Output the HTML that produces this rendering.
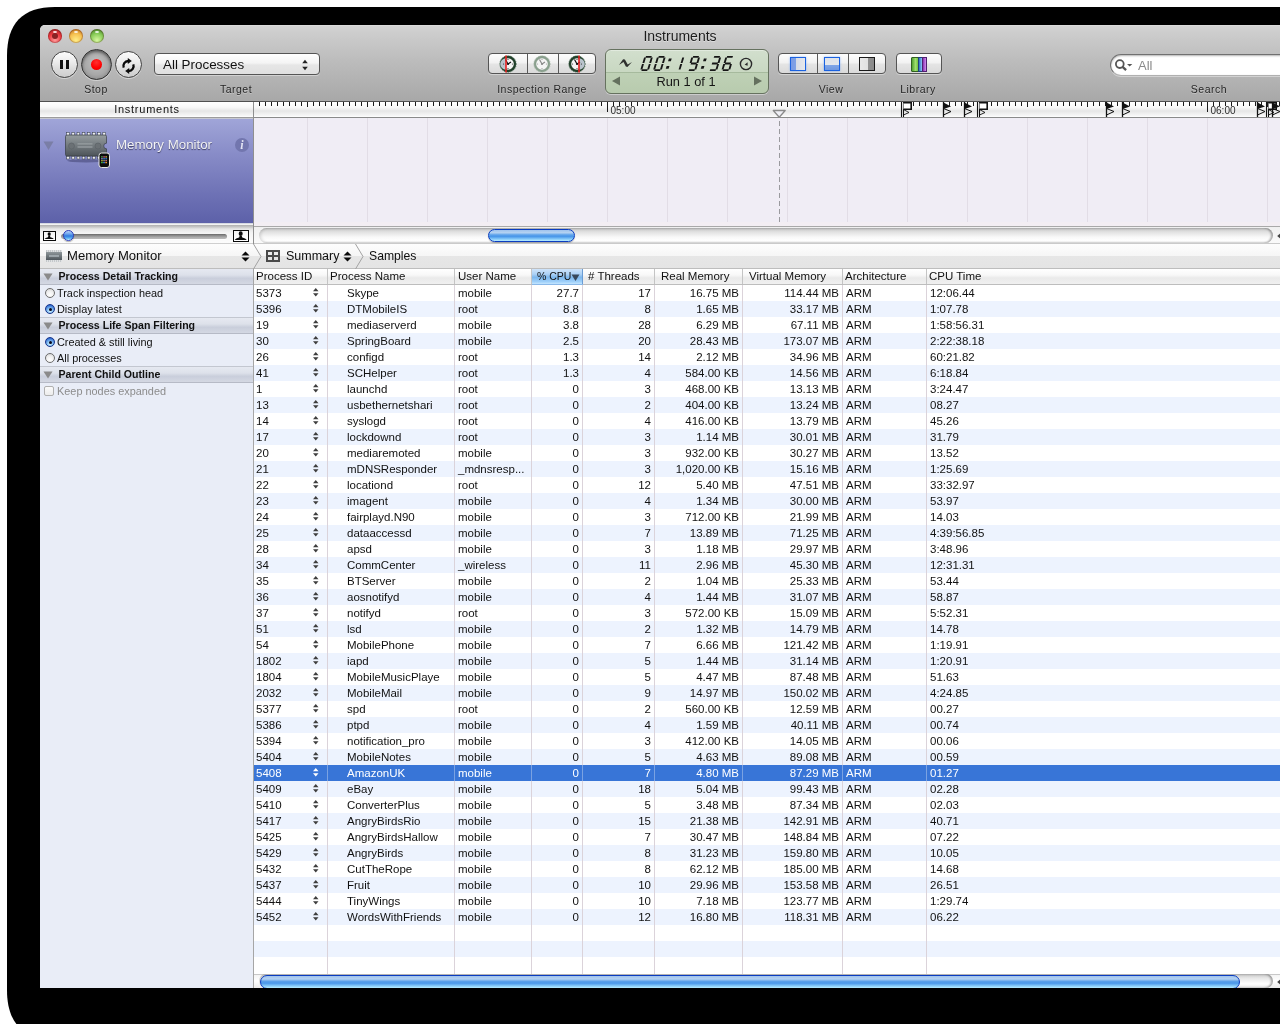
<!DOCTYPE html><html><head><meta charset="utf-8"><style>
*{margin:0;padding:0;box-sizing:border-box}
html,body{width:1280px;height:1024px;overflow:hidden;background:#fff;font-family:"Liberation Sans",sans-serif;color:#000}
div,span,svg{position:absolute}
#shadow{left:7px;top:7px;width:1400px;height:1100px;background:#000;border-radius:48px}
#win{will-change:transform;left:40px;top:25px;width:1260px;height:963px;overflow:hidden;border-radius:5px 5px 0 0;background:#e9edf6}
#tb{left:0;top:0;width:1260px;height:77px;background:linear-gradient(#e2e2e2 0,#d3d3d3 1px,#cdcdcd 10%,#bdbdbd 45%,#a8a8a8 100%);border-bottom:1px solid #505050}
.lbl{font-size:10.5px;letter-spacing:0.5px;color:#262626;white-space:nowrap;text-align:center;line-height:14px;text-shadow:0 1px 0 rgba(255,255,255,.3)}
.cbtn{border-radius:50%;border:1px solid #444;background:linear-gradient(#fcfcfc,#ececec 40%,#dadada 70%,#cdcdcd);box-shadow:0 1px 0 rgba(255,255,255,.45)}
.seg{border:1px solid #555;border-radius:4px;background:linear-gradient(#fdfdfd,#f2f2f2 45%,#e4e4e4 55%,#dadada);box-shadow:0 1px 0 rgba(255,255,255,.4)}
.vd{top:0;width:1px;height:100%;background:#5a5a5a}
.tbl{font-size:11.5px;line-height:16px;white-space:nowrap}
.r{text-align:right}
.hd{font-size:11.5px;line-height:15px;white-space:nowrap}
.sec{left:0;width:213px;height:16px;background:linear-gradient(#e8ebf3,#dde1ea 40%,#c9cedb 60%,#d6dae5);border-bottom:1px solid #b4b8c4;font-weight:bold;font-size:10.6px;line-height:15px}
.opt{font-size:10.9px;line-height:16px;white-space:nowrap}
</style></head><body><svg width="1280" height="1024" style="left:0;top:0"><path d="M55 7H1290V1039H55C22.4 1039 7 1022.6 7 990V56C7 23.4 22.4 7 55 7Z" fill="#000"/></svg><div id="win"><div id="tb"></div><div style="left:540px;top:3px;white-space:nowrap;width:200px;text-align:center;font-size:14px;line-height:17px;color:#1c1c1c;text-shadow:0 1px 0 rgba(255,255,255,.4)">Instruments</div><div style="left:8px;top:4px;width:14px;height:14px;border-radius:50%;background:radial-gradient(circle at 50% 80%,#ff9a9a 0,#ee3a40 50%,#8a1a1c 100%);box-shadow:inset 0 0 0 1px rgba(60,0,0,.25)"><div style="left:5px;top:1.5px;width:4px;height:2px;border-radius:50%;background:rgba(255,255,255,.85)"></div></div><div style="left:29px;top:4px;width:14px;height:14px;border-radius:50%;background:radial-gradient(circle at 50% 80%,#ffee88 0,#f6c050 50%,#b05a10 100%);box-shadow:inset 0 0 0 1px rgba(60,0,0,.25)"><div style="left:5px;top:1.5px;width:4px;height:2px;border-radius:50%;background:rgba(255,255,255,.85)"></div></div><div style="left:50px;top:4px;width:14px;height:14px;border-radius:50%;background:radial-gradient(circle at 50% 80%,#d8f8a0 0,#88cc58 50%,#357018 100%);box-shadow:inset 0 0 0 1px rgba(60,0,0,.25)"><div style="left:5px;top:1.5px;width:4px;height:2px;border-radius:50%;background:rgba(255,255,255,.85)"></div></div><div style="left:12px;top:8px;width:6px;height:6px;border-radius:50%;background:#8a2224"></div><div class="cbtn" style="left:11px;top:26px;width:27px;height:27px;"><div style="left:7.8px;top:8.2px;width:3.4px;height:9px;background:#111"></div><div style="left:13.8px;top:8.2px;width:3.4px;height:9px;background:#111"></div></div><div style="left:41px;top:24px;width:31px;height:31px;border-radius:50%;border:1px solid #333;background:radial-gradient(circle at 50% 45%,#c2c2c2 0,#a8a8a8 55%,#8a8a8a 85%,#5a5a5a 100%);box-shadow:inset 0 2px 3px rgba(0,0,0,.45),0 1px 0 rgba(255,255,255,.4)"><div style="left:9px;top:9px;width:11px;height:11px;border-radius:50%;background:radial-gradient(circle at 50% 30%,#ff3030,#f00 60%,#d00)"></div></div><div class="cbtn" style="left:75px;top:26px;width:27px;height:27px;"><svg width="25" height="25" viewBox="0 -1.5 25 25" style="left:0;top:0"><path d="M7.7 14.2A5 5 0 0 1 12.3 7.5" fill="none" stroke="#0a0a0a" stroke-width="2.3"/><path d="M11.8 4.4L15.8 7.5L11.8 10.6Z" fill="#0a0a0a"/><path d="M17.3 10.8A5 5 0 0 1 12.7 17.5" fill="none" stroke="#0a0a0a" stroke-width="2.3"/><path d="M13.2 14.4L9.2 17.5L13.2 20.6Z" fill="#0a0a0a"/></svg></div><div class="lbl" style="left:30px;top:57px;width:52px">Stop</div><div style="left:114px;top:28px;width:166px;height:22px;border:1px solid #555;border-radius:4px;background:linear-gradient(#ffffff,#f4f4f4 45%,#e6e6e6 55%,#e0e0e0);box-shadow:0 1px 0 rgba(255,255,255,.4)"><div style="left:8px;top:3px;white-space:nowrap;line-height:16px;font-size:13.4px;color:#111">All Processes</div><svg width="8" height="14" style="left:146px;top:3.5px"><path d="M1.2 5.2L4 1.8L6.8 5.2Z M1.2 8.8L4 12.2L6.8 8.8Z" fill="#222"/></svg></div><div class="lbl" style="left:166px;top:57px;width:60px">Target</div><div class="seg" style="left:448px;top:28px;width:108px;height:21px;"><div class="vd" style="left:37.5px"></div><div class="vd" style="left:68.5px"></div></div><svg width="20" height="20" style="left:458px;top:29px" viewBox="-10 -10 20 20"><circle r="8.2" fill="#21402a"/><circle r="8.2" fill="none" stroke="#3a5c42" stroke-width="0.8" stroke-dasharray="1 1"/><circle r="5.8" fill="#f4f4f4"/><path d="M-2 -5.8A5.8 5.8 0 0 0 -2 5.8Z" fill="#b9c3cc"/><path d="M0 0L-2.5 -4.5M0 0L3 -2" stroke="#111" stroke-width="1.2" fill="none"/><circle r="1.1" fill="#111"/><circle cx="4.40" cy="0.00" r="0.5" fill="#111"/><circle cx="0.00" cy="4.40" r="0.5" fill="#111"/><circle cx="-4.40" cy="0.00" r="0.5" fill="#111"/><circle cx="-0.00" cy="-4.40" r="0.5" fill="#111"/><path d="M-2 -8.5V8.5" stroke="#e82020" stroke-width="1.6"/></svg><svg width="20" height="20" style="left:492px;top:29px" viewBox="-10 -10 20 20"><circle r="8.2" fill="#8aa08e"/><circle r="8.2" fill="none" stroke="#a8b8aa" stroke-width="0.8" stroke-dasharray="1 1"/><circle r="5.8" fill="#f4f4f4"/><path d="M0 0L-2.5 -4.5M0 0L3 -2" stroke="#8a8a8a" stroke-width="1.2" fill="none"/><circle r="1.1" fill="#8a8a8a"/><circle cx="4.40" cy="0.00" r="0.5" fill="#8a8a8a"/><circle cx="0.00" cy="4.40" r="0.5" fill="#8a8a8a"/><circle cx="-4.40" cy="0.00" r="0.5" fill="#8a8a8a"/><circle cx="-0.00" cy="-4.40" r="0.5" fill="#8a8a8a"/></svg><svg width="20" height="20" style="left:527px;top:29px" viewBox="-10 -10 20 20"><circle r="8.2" fill="#21402a"/><circle r="8.2" fill="none" stroke="#3a5c42" stroke-width="0.8" stroke-dasharray="1 1"/><circle r="5.8" fill="#f4f4f4"/><path d="M2 -5.8A5.8 5.8 0 0 1 2 5.8Z" fill="#b9c3cc"/><path d="M0 0L-2.5 -4.5M0 0L3 -2" stroke="#111" stroke-width="1.2" fill="none"/><circle r="1.1" fill="#111"/><circle cx="4.40" cy="0.00" r="0.5" fill="#111"/><circle cx="0.00" cy="4.40" r="0.5" fill="#111"/><circle cx="-4.40" cy="0.00" r="0.5" fill="#111"/><circle cx="-0.00" cy="-4.40" r="0.5" fill="#111"/><path d="M2 -8.5V8.5" stroke="#e82020" stroke-width="1.6"/></svg><div class="lbl" style="left:446px;top:57px;width:112px">Inspection Range</div><div style="left:565px;top:24px;width:164px;height:45px;border:1px solid #66725f;border-radius:6px;background:linear-gradient(#d2dfcd 0,#c9d8c2 50%,#bfd1b6 51%,#b8cbae 100%);box-shadow:0 1px 0 rgba(255,255,255,.4),inset 0 1px 0 rgba(255,255,255,.35)"><div style="left:0;top:22px;width:162px;height:1px;background:rgba(150,170,140,.6)"></div></div><svg width="16" height="12" style="left:578px;top:32px" viewBox="618 57 16 12"><path d="M619 64.9L623.1 59.3L624.9 59.5L627.7 64.5L632 62L627.4 67.1L625.8 66.6L623.5 62Z" fill="#2e302e"/></svg><svg width="110" height="20" style="left:590px;top:28px" viewBox="630 53 110 20"><g transform="translate(640,71) skewX(-17)" stroke="#161616" stroke-width="1.9" stroke-linecap="butt"><path d="M1.4 -14.1L7.2 -14.1"/><path d="M7.7 -13.5L7.7 -8.1"/><path d="M7.7 -6.9L7.7 -1.5"/><path d="M1.4 -0.9L7.2 -0.9"/><path d="M0.9 -6.9L0.9 -1.5"/><path d="M0.9 -13.5L0.9 -8.1"/></g><g transform="translate(652.8,71) skewX(-17)" stroke="#161616" stroke-width="1.9" stroke-linecap="butt"><path d="M1.4 -14.1L7.2 -14.1"/><path d="M7.7 -13.5L7.7 -8.1"/><path d="M7.7 -6.9L7.7 -1.5"/><path d="M1.4 -0.9L7.2 -0.9"/><path d="M0.9 -6.9L0.9 -1.5"/><path d="M0.9 -13.5L0.9 -8.1"/></g><g transform="translate(671.4,71) skewX(-17)" stroke="#161616" stroke-width="1.9" stroke-linecap="butt"><path d="M7.7 -13.5L7.7 -8.1"/><path d="M7.7 -6.9L7.7 -1.5"/></g><g transform="translate(687.2,71) skewX(-17)" stroke="#161616" stroke-width="1.9" stroke-linecap="butt"><path d="M1.4 -14.1L7.2 -14.1"/><path d="M7.7 -13.5L7.7 -8.1"/><path d="M7.7 -6.9L7.7 -1.5"/><path d="M1.4 -0.9L7.2 -0.9"/><path d="M0.9 -13.5L0.9 -8.1"/><path d="M1.4 -7.5L7.2 -7.5"/></g><g transform="translate(708.3,71) skewX(-17)" stroke="#161616" stroke-width="1.9" stroke-linecap="butt"><path d="M1.4 -14.1L7.2 -14.1"/><path d="M7.7 -13.5L7.7 -8.1"/><path d="M7.7 -6.9L7.7 -1.5"/><path d="M1.4 -0.9L7.2 -0.9"/><path d="M1.4 -7.5L7.2 -7.5"/></g><g transform="translate(721.2,71) skewX(-17)" stroke="#161616" stroke-width="1.9" stroke-linecap="butt"><path d="M1.4 -14.1L7.2 -14.1"/><path d="M7.7 -6.9L7.7 -1.5"/><path d="M1.4 -0.9L7.2 -0.9"/><path d="M0.9 -6.9L0.9 -1.5"/><path d="M0.9 -13.5L0.9 -8.1"/><path d="M1.4 -7.5L7.2 -7.5"/></g><g transform="translate(666.5,71) skewX(-17)"><rect x="-1.4" y="-12.5" width="2.8" height="2.8" fill="#161616"/><rect x="-1.4" y="-5" width="2.8" height="2.8" fill="#161616"/></g><g transform="translate(701.5,71) skewX(-17)"><rect x="-1.4" y="-12.5" width="2.8" height="2.8" fill="#161616"/><rect x="-1.4" y="-5" width="2.8" height="2.8" fill="#161616"/></g></svg><svg width="16" height="16" style="left:698px;top:31px"><circle cx="8" cy="8" r="5.6" fill="none" stroke="#2a2a2a" stroke-width="1.4"/><path d="M9.6 6.2L6.6 8.8L9.6 9.8Z" fill="#2a2a2a"/></svg><svg width="10" height="11" style="left:571px;top:51px"><path d="M9 0.5L1 5L9 9.5Z" fill="#64705e"/></svg><svg width="10" height="11" style="left:713px;top:51px"><path d="M1 0.5L9 5L1 9.5Z" fill="#64705e"/></svg><div style="left:586px;top:48.5px;white-space:nowrap;width:120px;text-align:center;font-size:12.8px;line-height:16px;color:#151515">Run 1 of 1</div><div class="seg" style="left:738px;top:28px;width:108px;height:21px;"><div class="vd" style="left:37.5px"></div><div class="vd" style="left:68.5px"></div></div><div style="left:750px;top:32px;width:16px;height:14px;border:1.5px solid #1a62e0;background:linear-gradient(90deg,#7a9ae4 0,#7fa2e6 38%,#d8dde6 38%,#e6e8ec);box-shadow:0 0 2px rgba(40,120,255,.5)"></div><div style="left:784px;top:32px;width:16px;height:14px;border:1.5px solid #1a62e0;background:linear-gradient(#dfe3ea 0,#e4e7ec 58%,#80a6e8 58%,#7098e0);box-shadow:0 0 2px rgba(40,120,255,.5)"></div><div style="left:819px;top:32px;width:16px;height:14px;border:1.5px solid #1a1a1a;background:linear-gradient(90deg,#e8e8e8 0,#e0e0e0 60%,#909090 60%,#8a8a8a)"></div><div class="lbl" style="left:766px;top:57px;width:50px">View</div><div class="seg" style="left:856px;top:28px;width:46px;height:21px;"></div><div style="left:871px;top:32px;width:8px;height:15px;background:linear-gradient(90deg,#50a030,#a0e070 60%,#70c040);border:1px solid #306020;border-radius:1px"></div><div style="left:878px;top:32px;width:5px;height:15px;background:linear-gradient(90deg,#2a70c0,#90c8f8);border:1px solid #20407a"></div><div style="left:882px;top:32px;width:5px;height:15px;background:linear-gradient(90deg,#8a30b0,#d090f0);border:1px solid #502070"></div><div class="lbl" style="left:848px;top:57px;width:60px">Library</div><div style="left:1070px;top:29px;width:190px;height:22px;border:1px solid #707070;border-bottom-color:#b0b0b0;border-radius:11px;background:#fff;box-shadow:inset 0 1px 2px rgba(0,0,0,.3),0 1px 0 rgba(255,255,255,.4)"><svg width="24" height="16" style="left:4px;top:2px"><circle cx="4.8" cy="7.1" r="3.9" fill="none" stroke="#555" stroke-width="1.8"/><path d="M7.6 9.9L11.1 13.2" stroke="#555" stroke-width="2.3"/><path d="M12 7H17.3L14.65 9.6Z" fill="#555"/></svg><div style="left:27px;top:3px;font-size:13px;line-height:16px;color:#8a8a8a">All</div></div><div class="lbl" style="left:1139px;top:57px;width:60px">Search</div><div style="left:0px;top:77px;width:213px;height:15px;background:linear-gradient(#ffffff,#f8f8f8 35%,#e6e6e6 60%,#f6f6f6 90%,#fff)"><div style="left:0;top:0;width:214px;text-align:center;font-size:11px;letter-spacing:0.75px;line-height:15px;color:#111">Instruments</div></div><div style="left:0px;top:92px;width:213px;height:1px;background:#9c9c9c"></div><div style="left:0px;top:93px;width:213px;height:1px;background:#c8c9d2"></div><div style="left:213px;top:77px;width:1px;height:142px;background:#8f8f8f"></div><div style="left:214px;top:77px;width:1046px;height:15px;background:linear-gradient(#ffffff,#f8f8f8 35%,#e6e6e6 60%,#f6f6f6 90%,#fff)"></div><div style="left:219px;top:77px;width:1041px;height:4px;background:repeating-linear-gradient(90deg,#1a1a1a 0,#1a1a1a 1px,transparent 1px,transparent 6px)"></div><div style="left:267px;top:77px;width:993px;height:5px;background:repeating-linear-gradient(90deg,#1a1a1a 0,#1a1a1a 1px,transparent 1px,transparent 60px)"></div><div style="left:567px;top:77px;width:1px;height:10px;background:#1a1a1a"></div><div style="left:1167px;top:77px;width:1px;height:10px;background:#1a1a1a"></div><div style="left:570.5px;top:79.5px;white-space:nowrap;font-size:10px;line-height:12px;color:#2c2c2c">05:00</div><div style="left:1170.5px;top:79.5px;white-space:nowrap;font-size:10px;line-height:12px;color:#2c2c2c">06:00</div><div style="left:214px;top:92px;width:1046px;height:1px;background:#8a8a8a"></div><svg width="15" height="10" style="left:732px;top:83.5px"><path d="M1.3 1.5H13.2L7.25 8.2Z" fill="#f0f0f6" stroke="#8a8a8a" stroke-width="1.3" stroke-linejoin="round"/></svg><svg width="14" height="16" style="left:860px;top:77px" viewBox="900 102 14 16"><path d="M901.5 102V117M903.5 102V117" stroke="#111" stroke-width="1.1"/><path d="M903.5 102.8H911.2V109.2H903.5" fill="#fff" stroke="#111" stroke-width="1.6"/><path d="M903.5 109.5L909 112.5L903.5 115" fill="none" stroke="#111" stroke-width="0.9"/></svg><svg width="14" height="16" style="left:902px;top:77px" viewBox="942 102 14 16"><path d="M943.5 102V117" stroke="#111" stroke-width="1.3"/><path d="M943.5 102.5L951 106.5L943.5 109Z" fill="#111"/><path d="M943.5 108.5L951 111.5L943.5 115" fill="none" stroke="#111" stroke-width="1"/></svg><svg width="14" height="16" style="left:923px;top:77px" viewBox="963 102 14 16"><path d="M964.5 102V117" stroke="#111" stroke-width="1.3"/><path d="M964.5 102.5L972 106.5L964.5 109Z" fill="#111"/><path d="M964.5 108.5L972 111.5L964.5 115" fill="none" stroke="#111" stroke-width="1"/></svg><svg width="14" height="16" style="left:936px;top:77px" viewBox="976 102 14 16"><path d="M977.5 102V117M979.5 102V117" stroke="#111" stroke-width="1.1"/><path d="M979.5 102.8H987.2V109.2H979.5" fill="#fff" stroke="#111" stroke-width="1.6"/><path d="M979.5 109.5L985 112.5L979.5 115" fill="none" stroke="#111" stroke-width="0.9"/></svg><svg width="14" height="16" style="left:1065px;top:77px" viewBox="1105 102 14 16"><path d="M1106.5 102V117" stroke="#111" stroke-width="1.3"/><path d="M1106.5 102.5L1114 106.5L1106.5 109Z" fill="#111"/><path d="M1106.5 108.5L1114 111.5L1106.5 115" fill="none" stroke="#111" stroke-width="1"/></svg><svg width="14" height="16" style="left:1081px;top:77px" viewBox="1121 102 14 16"><path d="M1122.5 102V117" stroke="#111" stroke-width="1.3"/><path d="M1122.5 102.5L1130 106.5L1122.5 109Z" fill="#111"/><path d="M1122.5 108.5L1130 111.5L1122.5 115" fill="none" stroke="#111" stroke-width="1"/></svg><svg width="14" height="16" style="left:1216px;top:77px" viewBox="1256 102 14 16"><path d="M1257.5 102V117" stroke="#111" stroke-width="1.3"/><path d="M1257.5 102.5L1265 106.5L1257.5 109Z" fill="#111"/><path d="M1257.5 108.5L1265 111.5L1257.5 115" fill="none" stroke="#111" stroke-width="1"/></svg><svg width="14" height="16" style="left:1225px;top:77px" viewBox="1265 102 14 16"><path d="M1266.5 102V117M1268.5 102V117" stroke="#111" stroke-width="1.1"/><path d="M1268.5 102.8H1276.2V109.2H1268.5" fill="#fff" stroke="#111" stroke-width="1.6"/><path d="M1268.5 109.5L1274 112.5L1268.5 115" fill="none" stroke="#111" stroke-width="0.9"/></svg><svg width="14" height="16" style="left:1231px;top:77px" viewBox="1271 102 14 16"><path d="M1272.5 102V117" stroke="#111" stroke-width="1.3"/><path d="M1272.5 102.5L1280 106.5L1272.5 109Z" fill="#111"/><path d="M1272.5 108.5L1280 111.5L1272.5 115" fill="none" stroke="#111" stroke-width="1"/></svg><div style="left:0px;top:94px;width:213px;height:104px;background:linear-gradient(#a0a5d8,#878bc7 35%,#6c70b4 75%,#5d61a9)"></div><svg width="12" height="10" style="left:3px;top:116px"><path d="M0.5 0.5H10.5L5.5 9Z" fill="#7a7ea6"/></svg><svg width="48" height="40" style="left:24px;top:106px" viewBox="0 0 48 40"><defs><linearGradient id="cg" x1="0" y1="0" x2="0" y2="1"><stop offset="0" stop-color="#959c9f"/><stop offset=".5" stop-color="#737a7e"/><stop offset="1" stop-color="#4d5459"/></linearGradient></defs><ellipse cx="22" cy="29.8" rx="19" ry="1.6" fill="rgba(30,30,70,.35)"/><rect x="2.70" y="1.6" width="2.7" height="2.8" fill="#f2f2f2" stroke="#333a40" stroke-width=".5"/><rect x="7.86" y="1.6" width="2.7" height="2.8" fill="#f2f2f2" stroke="#333a40" stroke-width=".5"/><rect x="13.02" y="1.6" width="2.7" height="2.8" fill="#f2f2f2" stroke="#333a40" stroke-width=".5"/><rect x="18.18" y="1.6" width="2.7" height="2.8" fill="#f2f2f2" stroke="#333a40" stroke-width=".5"/><rect x="23.34" y="1.6" width="2.7" height="2.8" fill="#f2f2f2" stroke="#333a40" stroke-width=".5"/><rect x="28.50" y="1.6" width="2.7" height="2.8" fill="#f2f2f2" stroke="#333a40" stroke-width=".5"/><rect x="33.66" y="1.6" width="2.7" height="2.8" fill="#f2f2f2" stroke="#333a40" stroke-width=".5"/><rect x="38.82" y="1.6" width="2.7" height="2.8" fill="#f2f2f2" stroke="#333a40" stroke-width=".5"/><rect x="2.70" y="25.2" width="2.7" height="2.8" fill="#eeeeee" stroke="#333a40" stroke-width=".5"/><rect x="7.86" y="25.2" width="2.7" height="2.8" fill="#eeeeee" stroke="#333a40" stroke-width=".5"/><rect x="13.02" y="25.2" width="2.7" height="2.8" fill="#eeeeee" stroke="#333a40" stroke-width=".5"/><rect x="18.18" y="25.2" width="2.7" height="2.8" fill="#eeeeee" stroke="#333a40" stroke-width=".5"/><rect x="23.34" y="25.2" width="2.7" height="2.8" fill="#eeeeee" stroke="#333a40" stroke-width=".5"/><rect x="28.50" y="25.2" width="2.7" height="2.8" fill="#eeeeee" stroke="#333a40" stroke-width=".5"/><rect x="33.66" y="25.2" width="2.7" height="2.8" fill="#eeeeee" stroke="#333a40" stroke-width=".5"/><rect x="38.82" y="25.2" width="2.7" height="2.8" fill="#eeeeee" stroke="#333a40" stroke-width=".5"/><path d="M1.5 5.5Q1.5 4 3 4H41Q42.5 4 42.5 5.5V12.2A2.8 2.8 0 0 0 42.5 17.8V23.5Q42.5 25 41 25H3Q1.5 25 1.5 23.5Z" fill="url(#cg)" stroke="#383e44" stroke-width=".7"/><circle cx="7.5" cy="15" r="3" fill="#6b7175" stroke="#596064" stroke-width=".6"/><circle cx="34" cy="15" r="3" fill="#6b7175" stroke="#596064" stroke-width=".6"/><rect x="13.5" y="12.3" width="15" height="1.2" fill="#a9afb2" opacity=".7"/><rect x="13.5" y="15.2" width="15" height="1.6" fill="#a9afb2" opacity=".6"/></svg><svg width="13" height="17" style="left:58px;top:127px" viewBox="0 0 13 17"><rect x="1" y="1" width="10.5" height="14.5" rx="2.5" fill="#0c0c0c" stroke="#e6e6e6" stroke-width="1"/><rect x="3" y="4" width="6.5" height="8" fill="#111"/><rect x="3.2" y="4.3" width="1.5" height="1.2" fill="#5c5"/><rect x="5.3" y="4.3" width="1.5" height="1.2" fill="#e5a"/><rect x="7.4" y="4.3" width="1.5" height="1.2" fill="#ec4"/><rect x="3.2" y="6.2" width="1.5" height="1.2" fill="#a9e"/><rect x="5.3" y="6.2" width="1.5" height="1.2" fill="#3ae"/><rect x="7.4" y="6.2" width="1.5" height="1.2" fill="#48f"/><rect x="3.2" y="8.1" width="1.5" height="1.2" fill="#cc4"/><rect x="5.3" y="8.1" width="1.5" height="1.2" fill="#999"/><rect x="7.4" y="8.1" width="1.5" height="1.2" fill="#e77"/><rect x="3.2" y="10.0" width="1.5" height="1.2" fill="#4c4"/><rect x="5.3" y="10.0" width="1.5" height="1.2" fill="#48f"/><rect x="7.4" y="10.0" width="1.5" height="1.2" fill="#fa3"/></svg><div style="left:76px;top:112px;white-space:nowrap;font-size:13.3px;line-height:16px;color:#f2f2f4;text-shadow:0 1px 1px rgba(30,30,60,.75)">Memory Monitor</div><div style="left:195px;top:113px;width:14px;height:14px;border-radius:50%;background:#7276ae"><div style="left:0;top:0;width:14px;text-align:center;font:italic bold 12px/14px 'Liberation Serif',serif;color:#e2e3f2">i</div></div><div style="left:214px;top:93px;width:1046px;height:104px;background:#f0edf5"></div><div style="left:267px;top:93px;width:993px;height:104px;background:repeating-linear-gradient(90deg,#e2dde6 0,#e2dde6 1px,transparent 1px,transparent 60px)"></div><div style="left:739px;top:96px;width:1px;height:101px;background:repeating-linear-gradient(#9a9a9e 0,#9a9a9e 5px,transparent 5px,transparent 8px)"></div><div style="left:0px;top:198px;width:213px;height:20px;background:linear-gradient(#d6d9e2 0,#d6d9e2 1px,#f2f2f2 1px,#f2f2f2 2px,#aeaeae 2px,#c8c8c8 4px,#e6e6e6 6px,#f4f4f4 50%,#fcfcfc 100%)"></div><div style="left:0px;top:218px;width:213px;height:1px;background:#cfcfcf"></div><div style="left:3px;top:206px;width:13px;height:10px;border:1.3px solid #0a0a0a;background:linear-gradient(#f4f4f4,#fff)"><svg width="10.4" height="7.4" style="left:0;top:0" viewBox="0 0 10 8" preserveAspectRatio="none"><ellipse cx="5" cy="2.3" rx="1.5" ry="2" fill="#0a0a0a"/><path d="M0.3 8Q1 6.2 3.8 5.6L4.2 4.3H5.8L6.2 5.6Q9 6.2 9.7 8Z" fill="#0a0a0a"/></svg></div><div style="left:193px;top:205px;width:16px;height:12px;border:1.3px solid #0a0a0a;background:linear-gradient(#f4f4f4,#fff)"><svg width="13.4" height="9.4" style="left:0;top:0" viewBox="0 0 10 8" preserveAspectRatio="none"><ellipse cx="5" cy="2.3" rx="1.5" ry="2" fill="#0a0a0a"/><path d="M0.3 8Q1 6.2 3.8 5.6L4.2 4.3H5.8L6.2 5.6Q9 6.2 9.7 8Z" fill="#0a0a0a"/></svg></div><div style="left:21px;top:209px;width:166px;height:5px;border-radius:2.5px;background:linear-gradient(#686868,#8a8a8a 30%,#acacac 65%,#bcbcbc);box-shadow:0 1px 0 rgba(255,255,255,.8)"></div><div style="left:23px;top:205px;width:11px;height:11px;border-radius:50%;border:1px solid #2a3cb8;background:linear-gradient(#b8d4f8 0,#6aa2ec 35%,#2f7ae0 55%,#5ab0f0 80%,#c4f4ff 100%);box-shadow:0 1px 1px rgba(0,0,0,.3)"></div><div style="left:214px;top:197px;width:1046px;height:21px;background:linear-gradient(#f3eef3 0,#f3eef3 4px,#a9a9a9 4px,#a9a9a9 5px,#f0f0f0 5px,#fafafa 100%)"></div><div style="left:214px;top:218px;width:1046px;height:1px;background:#cacaca"></div><div style="left:219px;top:203px;width:1014px;height:15px;border-radius:8px;background:linear-gradient(#c4c4c4,#e0e0e0 25%,#f8f8f8 60%,#ffffff 85%,#f0f0f0);box-shadow:inset 2px 0 3px rgba(0,0,0,.12),inset -2px 0 2px rgba(0,0,0,.3)"></div><div style="left:448px;top:204px;width:87px;height:13px;border-radius:7px;border:1px solid #0a3cc0;background:linear-gradient(#9fc2ec 0,#b4d2f2 25%,#5aa0ea 45%,#4a98ea 60%,#8ed0fa 85%,#b8ecff 100%);box-shadow:0 1px 1px rgba(0,0,0,.25)"></div><svg width="8" height="10" style="left:1236px;top:206px"><path d="M5 1.8L1.2 5L5 8.2Z" fill="#444"/></svg><div style="left:0px;top:219px;width:1260px;height:24px;background:linear-gradient(#fdfdfd 0,#f6f6f6 48%,#e6e6e6 50%,#e4e4e4 100%)"></div><div style="left:0px;top:243px;width:1260px;height:1px;background:#bdbdbd"></div><div style="left:6px;top:227px;width:16px;height:8px;background:linear-gradient(#8e969a,#6c7478 55%,#4e565c)"><div style="left:3px;top:3px;width:10px;height:2px;background:rgba(200,210,215,.5)"></div></div><div style="left:6px;top:225px;width:16px;height:2px;background:repeating-linear-gradient(90deg,#c4c8ca 0,#c4c8ca 1px,#e0e2e4 1px,#e0e2e4 2px)"></div><div style="left:6px;top:235px;width:16px;height:2px;background:repeating-linear-gradient(90deg,#c4c8ca 0,#c4c8ca 1px,#e0e2e4 1px,#e0e2e4 2px)"></div><div style="left:27px;top:223px;white-space:nowrap;font-size:13.1px;line-height:16px;color:#0e0e0e">Memory Monitor</div><svg width="9" height="13" style="left:201px;top:226px"><path d="M0.5 4.5L4.5 0.5L8.5 4.5Z M0.5 6.5L4.5 10.5L8.5 6.5Z" fill="#0a0a0a"/></svg><svg width="12" height="25" style="left:213px;top:219px"><path d="M0.5 0L8 12.5L0.5 25" fill="none" stroke="#a2a2a2" stroke-width="1"/></svg><svg width="12" height="25" style="left:315px;top:219px"><path d="M0.5 0L8 12.5L0.5 25" fill="none" stroke="#a2a2a2" stroke-width="1"/></svg><svg width="15" height="13" style="left:226px;top:225px"><rect x="0" y="0" width="14" height="12" fill="#4a4a4a"/><rect x="2" y="2" width="4" height="3" fill="#ececec"/><rect x="8" y="2" width="4" height="3" fill="#ececec"/><rect x="2" y="7" width="4" height="3" fill="#e4e4e4"/><rect x="8" y="7" width="4" height="3" fill="#e4e4e4"/></svg><div style="left:246px;top:223px;white-space:nowrap;font-size:12.5px;line-height:16px;color:#0e0e0e">Summary</div><svg width="9" height="13" style="left:303px;top:226px"><path d="M0.5 4.5L4.5 0.5L8.5 4.5Z M0.5 6.5L4.5 10.5L8.5 6.5Z" fill="#0a0a0a"/></svg><div style="left:329px;top:223px;white-space:nowrap;font-size:12.2px;line-height:16px;color:#0e0e0e">Samples</div><div style="left:0px;top:244px;width:213px;height:719px;background:#e9edf7"></div><div style="left:213px;top:244px;width:1px;height:719px;background:#a6a6a6"></div><div style="left:0px;top:244px;width:213px;height:15px;background:linear-gradient(#e6e9f1,#dde1ea 40%,#c9cedb 62%,#d4d8e3)"><svg width="12" height="10" style="left:3px;top:3.5px"><path d="M0.5 0.5H9.5L5 7.5Z" fill="#8a8a8a"/></svg><div style="left:18.5px;top:0;white-space:nowrap;color:#111;font-weight:bold;font-size:10.6px;line-height:15px">Process Detail Tracking</div></div><div style="left:0px;top:259px;width:213px;height:1px;background:#b6bac6"></div><div style="left:5px;top:263px;width:10px;height:10px;border-radius:50%;border:1px solid #6c6c6c;background:radial-gradient(circle at 50% 75%,#ffffff 0,#f0f0f0 50%,#d0d0d0)"></div><div class="opt" style="left:17px;top:260px;color:#111">Track inspection head</div><div style="left:5px;top:279px;width:10px;height:10px;border-radius:50%;border:1px solid #17348a;background:radial-gradient(circle at 50% 75%,#d8f4ff 0,#8ac4f4 35%,#2f6ad0 80%)"><div style="left:2.5px;top:2.5px;width:3px;height:3px;border-radius:50%;background:#06061a"></div></div><div class="opt" style="left:17px;top:276px;color:#111">Display latest</div><div style="left:0px;top:292px;width:213px;height:1px;background:#c3c7d0"></div><div style="left:0px;top:293px;width:213px;height:15px;background:linear-gradient(#e6e9f1,#dde1ea 40%,#c9cedb 62%,#d4d8e3)"><svg width="12" height="10" style="left:3px;top:3.5px"><path d="M0.5 0.5H9.5L5 7.5Z" fill="#8a8a8a"/></svg><div style="left:18.5px;top:0;white-space:nowrap;color:#111;font-weight:bold;font-size:10.6px;line-height:15px">Process Life Span Filtering</div></div><div style="left:0px;top:308px;width:213px;height:1px;background:#b6bac6"></div><div style="left:5px;top:312px;width:10px;height:10px;border-radius:50%;border:1px solid #17348a;background:radial-gradient(circle at 50% 75%,#d8f4ff 0,#8ac4f4 35%,#2f6ad0 80%)"><div style="left:2.5px;top:2.5px;width:3px;height:3px;border-radius:50%;background:#06061a"></div></div><div class="opt" style="left:17px;top:309px;color:#111">Created &amp; still living</div><div style="left:5px;top:328px;width:10px;height:10px;border-radius:50%;border:1px solid #6c6c6c;background:radial-gradient(circle at 50% 75%,#ffffff 0,#f0f0f0 50%,#d0d0d0)"></div><div class="opt" style="left:17px;top:325px;color:#111">All processes</div><div style="left:0px;top:341px;width:213px;height:1px;background:#c3c7d0"></div><div style="left:0px;top:342px;width:213px;height:15px;background:linear-gradient(#e6e9f1,#dde1ea 40%,#c9cedb 62%,#d4d8e3)"><svg width="12" height="10" style="left:3px;top:3.5px"><path d="M0.5 0.5H9.5L5 7.5Z" fill="#8a8a8a"/></svg><div style="left:18.5px;top:0;white-space:nowrap;color:#111;font-weight:bold;font-size:10.6px;line-height:15px">Parent Child Outline</div></div><div style="left:0px;top:357px;width:213px;height:1px;background:#b6bac6"></div><div style="left:4px;top:361px;width:10px;height:10px;border:1px solid #b0b0b0;border-radius:2px;background:linear-gradient(#fbfbfb,#ececec)"></div><div class="opt" style="left:17px;top:358px;color:#8c8c8c">Keep nodes expanded</div><div style="left:214px;top:244px;width:1046px;height:15px;background:linear-gradient(#ffffff,#f8f8f8 40%,#eaeaea 60%,#f0f0f0)"></div><div style="left:492px;top:244px;width:51px;height:15px;background:linear-gradient(#cfe4fa,#acd1f5 35%,#7db7ec 55%,#9fd0fa 85%,#c4e6ff);border-right:1px solid #6a9cd4"></div><div style="left:214px;top:259px;width:1046px;height:1px;background:#bdbdbd"></div><div style="left:492px;top:259px;width:51px;height:1px;background:#8ab8e8"></div><div class="hd" style="left:216px;top:244px;color:#111;">Process ID</div><div class="hd" style="left:290px;top:244px;color:#111;">Process Name</div><div class="hd" style="left:418px;top:244px;color:#111;">User Name</div><div class="hd" style="left:497px;top:244px;color:#111;font-size:10.5px;">% CPU</div><div class="hd" style="left:548px;top:244px;color:#111;"># Threads</div><div class="hd" style="left:621px;top:244px;color:#111;">Real Memory</div><div class="hd" style="left:709px;top:244px;color:#111;">Virtual Memory</div><div class="hd" style="left:805px;top:244px;color:#111;">Architecture</div><div class="hd" style="left:889px;top:244px;color:#111;">CPU Time</div><div style="left:287px;top:244px;width:1px;height:15px;background:#c4c4c4"></div><div style="left:414px;top:244px;width:1px;height:15px;background:#c4c4c4"></div><div style="left:491px;top:244px;width:1px;height:15px;background:#c4c4c4"></div><div style="left:614px;top:244px;width:1px;height:15px;background:#c4c4c4"></div><div style="left:702px;top:244px;width:1px;height:15px;background:#c4c4c4"></div><div style="left:802px;top:244px;width:1px;height:15px;background:#c4c4c4"></div><div style="left:886px;top:244px;width:1px;height:15px;background:#c4c4c4"></div><svg width="9" height="8" style="left:531px;top:249px"><path d="M0.5 0.5H8.5L4.5 7Z" fill="#38485a"/></svg><div style="left:214px;top:260px;width:1046px;height:689px;background:#fff"></div><div style="left:214px;top:276px;width:1046px;height:16px;background:#edf3fe"></div><div style="left:214px;top:308px;width:1046px;height:16px;background:#edf3fe"></div><div style="left:214px;top:340px;width:1046px;height:16px;background:#edf3fe"></div><div style="left:214px;top:372px;width:1046px;height:16px;background:#edf3fe"></div><div style="left:214px;top:404px;width:1046px;height:16px;background:#edf3fe"></div><div style="left:214px;top:436px;width:1046px;height:16px;background:#edf3fe"></div><div style="left:214px;top:468px;width:1046px;height:16px;background:#edf3fe"></div><div style="left:214px;top:500px;width:1046px;height:16px;background:#edf3fe"></div><div style="left:214px;top:532px;width:1046px;height:16px;background:#edf3fe"></div><div style="left:214px;top:564px;width:1046px;height:16px;background:#edf3fe"></div><div style="left:214px;top:596px;width:1046px;height:16px;background:#edf3fe"></div><div style="left:214px;top:628px;width:1046px;height:16px;background:#edf3fe"></div><div style="left:214px;top:660px;width:1046px;height:16px;background:#edf3fe"></div><div style="left:214px;top:692px;width:1046px;height:16px;background:#edf3fe"></div><div style="left:214px;top:724px;width:1046px;height:16px;background:#edf3fe"></div><div style="left:214px;top:740px;width:1046px;height:16px;background:#3875d7"></div><div style="left:214px;top:756px;width:1046px;height:16px;background:#edf3fe"></div><div style="left:214px;top:788px;width:1046px;height:16px;background:#edf3fe"></div><div style="left:214px;top:820px;width:1046px;height:16px;background:#edf3fe"></div><div style="left:214px;top:852px;width:1046px;height:16px;background:#edf3fe"></div><div style="left:214px;top:884px;width:1046px;height:16px;background:#edf3fe"></div><div style="left:214px;top:916px;width:1046px;height:16px;background:#edf3fe"></div><div style="left:287px;top:260px;width:1px;height:689px;background:#dbd3da"></div><div style="left:414px;top:260px;width:1px;height:689px;background:#dbd3da"></div><div style="left:491px;top:260px;width:1px;height:689px;background:#dbd3da"></div><div style="left:542px;top:260px;width:1px;height:689px;background:#dbd3da"></div><div style="left:614px;top:260px;width:1px;height:689px;background:#dbd3da"></div><div style="left:702px;top:260px;width:1px;height:689px;background:#dbd3da"></div><div style="left:802px;top:260px;width:1px;height:689px;background:#dbd3da"></div><div style="left:886px;top:260px;width:1px;height:689px;background:#dbd3da"></div><div style="left:287px;top:740px;width:1px;height:16px;background:#7aa2e2"></div><div style="left:414px;top:740px;width:1px;height:16px;background:#7aa2e2"></div><div style="left:491px;top:740px;width:1px;height:16px;background:#7aa2e2"></div><div style="left:542px;top:740px;width:1px;height:16px;background:#7aa2e2"></div><div style="left:614px;top:740px;width:1px;height:16px;background:#7aa2e2"></div><div style="left:702px;top:740px;width:1px;height:16px;background:#7aa2e2"></div><div style="left:802px;top:740px;width:1px;height:16px;background:#7aa2e2"></div><div style="left:886px;top:740px;width:1px;height:16px;background:#7aa2e2"></div><div class="tbl" style="left:216px;top:260px;color:#111">5373</div><svg width="7" height="10" style="left:272.5px;top:262.5px"><path d="M0 3.3L2.75 0L5.5 3.3Z M0 5.2L2.75 8.5L5.5 5.2Z" fill="#3e3e3e"/></svg><div class="tbl" style="left:307px;top:260px;color:#111">Skype</div><div class="tbl" style="left:418px;top:260px;color:#111">mobile</div><div class="tbl r" style="left:440px;width:99px;top:260px;color:#111">27.7</div><div class="tbl r" style="left:510px;width:101px;top:260px;color:#111">17</div><div class="tbl r" style="left:600px;width:99px;top:260px;color:#111">16.75 MB</div><div class="tbl r" style="left:700px;width:99px;top:260px;color:#111">114.44 MB</div><div class="tbl" style="left:806px;top:260px;color:#111">ARM</div><div class="tbl" style="left:890px;top:260px;color:#111">12:06.44</div><div class="tbl" style="left:216px;top:276px;color:#111">5396</div><svg width="7" height="10" style="left:272.5px;top:278.5px"><path d="M0 3.3L2.75 0L5.5 3.3Z M0 5.2L2.75 8.5L5.5 5.2Z" fill="#3e3e3e"/></svg><div class="tbl" style="left:307px;top:276px;color:#111">DTMobileIS</div><div class="tbl" style="left:418px;top:276px;color:#111">root</div><div class="tbl r" style="left:440px;width:99px;top:276px;color:#111">8.8</div><div class="tbl r" style="left:510px;width:101px;top:276px;color:#111">8</div><div class="tbl r" style="left:600px;width:99px;top:276px;color:#111">1.65 MB</div><div class="tbl r" style="left:700px;width:99px;top:276px;color:#111">33.17 MB</div><div class="tbl" style="left:806px;top:276px;color:#111">ARM</div><div class="tbl" style="left:890px;top:276px;color:#111">1:07.78</div><div class="tbl" style="left:216px;top:292px;color:#111">19</div><svg width="7" height="10" style="left:272.5px;top:294.5px"><path d="M0 3.3L2.75 0L5.5 3.3Z M0 5.2L2.75 8.5L5.5 5.2Z" fill="#3e3e3e"/></svg><div class="tbl" style="left:307px;top:292px;color:#111">mediaserverd</div><div class="tbl" style="left:418px;top:292px;color:#111">mobile</div><div class="tbl r" style="left:440px;width:99px;top:292px;color:#111">3.8</div><div class="tbl r" style="left:510px;width:101px;top:292px;color:#111">28</div><div class="tbl r" style="left:600px;width:99px;top:292px;color:#111">6.29 MB</div><div class="tbl r" style="left:700px;width:99px;top:292px;color:#111">67.11 MB</div><div class="tbl" style="left:806px;top:292px;color:#111">ARM</div><div class="tbl" style="left:890px;top:292px;color:#111">1:58:56.31</div><div class="tbl" style="left:216px;top:308px;color:#111">30</div><svg width="7" height="10" style="left:272.5px;top:310.5px"><path d="M0 3.3L2.75 0L5.5 3.3Z M0 5.2L2.75 8.5L5.5 5.2Z" fill="#3e3e3e"/></svg><div class="tbl" style="left:307px;top:308px;color:#111">SpringBoard</div><div class="tbl" style="left:418px;top:308px;color:#111">mobile</div><div class="tbl r" style="left:440px;width:99px;top:308px;color:#111">2.5</div><div class="tbl r" style="left:510px;width:101px;top:308px;color:#111">20</div><div class="tbl r" style="left:600px;width:99px;top:308px;color:#111">28.43 MB</div><div class="tbl r" style="left:700px;width:99px;top:308px;color:#111">173.07 MB</div><div class="tbl" style="left:806px;top:308px;color:#111">ARM</div><div class="tbl" style="left:890px;top:308px;color:#111">2:22:38.18</div><div class="tbl" style="left:216px;top:324px;color:#111">26</div><svg width="7" height="10" style="left:272.5px;top:326.5px"><path d="M0 3.3L2.75 0L5.5 3.3Z M0 5.2L2.75 8.5L5.5 5.2Z" fill="#3e3e3e"/></svg><div class="tbl" style="left:307px;top:324px;color:#111">configd</div><div class="tbl" style="left:418px;top:324px;color:#111">root</div><div class="tbl r" style="left:440px;width:99px;top:324px;color:#111">1.3</div><div class="tbl r" style="left:510px;width:101px;top:324px;color:#111">14</div><div class="tbl r" style="left:600px;width:99px;top:324px;color:#111">2.12 MB</div><div class="tbl r" style="left:700px;width:99px;top:324px;color:#111">34.96 MB</div><div class="tbl" style="left:806px;top:324px;color:#111">ARM</div><div class="tbl" style="left:890px;top:324px;color:#111">60:21.82</div><div class="tbl" style="left:216px;top:340px;color:#111">41</div><svg width="7" height="10" style="left:272.5px;top:342.5px"><path d="M0 3.3L2.75 0L5.5 3.3Z M0 5.2L2.75 8.5L5.5 5.2Z" fill="#3e3e3e"/></svg><div class="tbl" style="left:307px;top:340px;color:#111">SCHelper</div><div class="tbl" style="left:418px;top:340px;color:#111">root</div><div class="tbl r" style="left:440px;width:99px;top:340px;color:#111">1.3</div><div class="tbl r" style="left:510px;width:101px;top:340px;color:#111">4</div><div class="tbl r" style="left:600px;width:99px;top:340px;color:#111">584.00 KB</div><div class="tbl r" style="left:700px;width:99px;top:340px;color:#111">14.56 MB</div><div class="tbl" style="left:806px;top:340px;color:#111">ARM</div><div class="tbl" style="left:890px;top:340px;color:#111">6:18.84</div><div class="tbl" style="left:216px;top:356px;color:#111">1</div><svg width="7" height="10" style="left:272.5px;top:358.5px"><path d="M0 3.3L2.75 0L5.5 3.3Z M0 5.2L2.75 8.5L5.5 5.2Z" fill="#3e3e3e"/></svg><div class="tbl" style="left:307px;top:356px;color:#111">launchd</div><div class="tbl" style="left:418px;top:356px;color:#111">root</div><div class="tbl r" style="left:440px;width:99px;top:356px;color:#111">0</div><div class="tbl r" style="left:510px;width:101px;top:356px;color:#111">3</div><div class="tbl r" style="left:600px;width:99px;top:356px;color:#111">468.00 KB</div><div class="tbl r" style="left:700px;width:99px;top:356px;color:#111">13.13 MB</div><div class="tbl" style="left:806px;top:356px;color:#111">ARM</div><div class="tbl" style="left:890px;top:356px;color:#111">3:24.47</div><div class="tbl" style="left:216px;top:372px;color:#111">13</div><svg width="7" height="10" style="left:272.5px;top:374.5px"><path d="M0 3.3L2.75 0L5.5 3.3Z M0 5.2L2.75 8.5L5.5 5.2Z" fill="#3e3e3e"/></svg><div class="tbl" style="left:307px;top:372px;color:#111">usbethernetshari</div><div class="tbl" style="left:418px;top:372px;color:#111">root</div><div class="tbl r" style="left:440px;width:99px;top:372px;color:#111">0</div><div class="tbl r" style="left:510px;width:101px;top:372px;color:#111">2</div><div class="tbl r" style="left:600px;width:99px;top:372px;color:#111">404.00 KB</div><div class="tbl r" style="left:700px;width:99px;top:372px;color:#111">13.24 MB</div><div class="tbl" style="left:806px;top:372px;color:#111">ARM</div><div class="tbl" style="left:890px;top:372px;color:#111">08.27</div><div class="tbl" style="left:216px;top:388px;color:#111">14</div><svg width="7" height="10" style="left:272.5px;top:390.5px"><path d="M0 3.3L2.75 0L5.5 3.3Z M0 5.2L2.75 8.5L5.5 5.2Z" fill="#3e3e3e"/></svg><div class="tbl" style="left:307px;top:388px;color:#111">syslogd</div><div class="tbl" style="left:418px;top:388px;color:#111">root</div><div class="tbl r" style="left:440px;width:99px;top:388px;color:#111">0</div><div class="tbl r" style="left:510px;width:101px;top:388px;color:#111">4</div><div class="tbl r" style="left:600px;width:99px;top:388px;color:#111">416.00 KB</div><div class="tbl r" style="left:700px;width:99px;top:388px;color:#111">13.79 MB</div><div class="tbl" style="left:806px;top:388px;color:#111">ARM</div><div class="tbl" style="left:890px;top:388px;color:#111">45.26</div><div class="tbl" style="left:216px;top:404px;color:#111">17</div><svg width="7" height="10" style="left:272.5px;top:406.5px"><path d="M0 3.3L2.75 0L5.5 3.3Z M0 5.2L2.75 8.5L5.5 5.2Z" fill="#3e3e3e"/></svg><div class="tbl" style="left:307px;top:404px;color:#111">lockdownd</div><div class="tbl" style="left:418px;top:404px;color:#111">root</div><div class="tbl r" style="left:440px;width:99px;top:404px;color:#111">0</div><div class="tbl r" style="left:510px;width:101px;top:404px;color:#111">3</div><div class="tbl r" style="left:600px;width:99px;top:404px;color:#111">1.14 MB</div><div class="tbl r" style="left:700px;width:99px;top:404px;color:#111">30.01 MB</div><div class="tbl" style="left:806px;top:404px;color:#111">ARM</div><div class="tbl" style="left:890px;top:404px;color:#111">31.79</div><div class="tbl" style="left:216px;top:420px;color:#111">20</div><svg width="7" height="10" style="left:272.5px;top:422.5px"><path d="M0 3.3L2.75 0L5.5 3.3Z M0 5.2L2.75 8.5L5.5 5.2Z" fill="#3e3e3e"/></svg><div class="tbl" style="left:307px;top:420px;color:#111">mediaremoted</div><div class="tbl" style="left:418px;top:420px;color:#111">mobile</div><div class="tbl r" style="left:440px;width:99px;top:420px;color:#111">0</div><div class="tbl r" style="left:510px;width:101px;top:420px;color:#111">3</div><div class="tbl r" style="left:600px;width:99px;top:420px;color:#111">932.00 KB</div><div class="tbl r" style="left:700px;width:99px;top:420px;color:#111">30.27 MB</div><div class="tbl" style="left:806px;top:420px;color:#111">ARM</div><div class="tbl" style="left:890px;top:420px;color:#111">13.52</div><div class="tbl" style="left:216px;top:436px;color:#111">21</div><svg width="7" height="10" style="left:272.5px;top:438.5px"><path d="M0 3.3L2.75 0L5.5 3.3Z M0 5.2L2.75 8.5L5.5 5.2Z" fill="#3e3e3e"/></svg><div class="tbl" style="left:307px;top:436px;color:#111">mDNSResponder</div><div class="tbl" style="left:418px;top:436px;color:#111">_mdnsresp...</div><div class="tbl r" style="left:440px;width:99px;top:436px;color:#111">0</div><div class="tbl r" style="left:510px;width:101px;top:436px;color:#111">3</div><div class="tbl r" style="left:600px;width:99px;top:436px;color:#111">1,020.00 KB</div><div class="tbl r" style="left:700px;width:99px;top:436px;color:#111">15.16 MB</div><div class="tbl" style="left:806px;top:436px;color:#111">ARM</div><div class="tbl" style="left:890px;top:436px;color:#111">1:25.69</div><div class="tbl" style="left:216px;top:452px;color:#111">22</div><svg width="7" height="10" style="left:272.5px;top:454.5px"><path d="M0 3.3L2.75 0L5.5 3.3Z M0 5.2L2.75 8.5L5.5 5.2Z" fill="#3e3e3e"/></svg><div class="tbl" style="left:307px;top:452px;color:#111">locationd</div><div class="tbl" style="left:418px;top:452px;color:#111">root</div><div class="tbl r" style="left:440px;width:99px;top:452px;color:#111">0</div><div class="tbl r" style="left:510px;width:101px;top:452px;color:#111">12</div><div class="tbl r" style="left:600px;width:99px;top:452px;color:#111">5.40 MB</div><div class="tbl r" style="left:700px;width:99px;top:452px;color:#111">47.51 MB</div><div class="tbl" style="left:806px;top:452px;color:#111">ARM</div><div class="tbl" style="left:890px;top:452px;color:#111">33:32.97</div><div class="tbl" style="left:216px;top:468px;color:#111">23</div><svg width="7" height="10" style="left:272.5px;top:470.5px"><path d="M0 3.3L2.75 0L5.5 3.3Z M0 5.2L2.75 8.5L5.5 5.2Z" fill="#3e3e3e"/></svg><div class="tbl" style="left:307px;top:468px;color:#111">imagent</div><div class="tbl" style="left:418px;top:468px;color:#111">mobile</div><div class="tbl r" style="left:440px;width:99px;top:468px;color:#111">0</div><div class="tbl r" style="left:510px;width:101px;top:468px;color:#111">4</div><div class="tbl r" style="left:600px;width:99px;top:468px;color:#111">1.34 MB</div><div class="tbl r" style="left:700px;width:99px;top:468px;color:#111">30.00 MB</div><div class="tbl" style="left:806px;top:468px;color:#111">ARM</div><div class="tbl" style="left:890px;top:468px;color:#111">53.97</div><div class="tbl" style="left:216px;top:484px;color:#111">24</div><svg width="7" height="10" style="left:272.5px;top:486.5px"><path d="M0 3.3L2.75 0L5.5 3.3Z M0 5.2L2.75 8.5L5.5 5.2Z" fill="#3e3e3e"/></svg><div class="tbl" style="left:307px;top:484px;color:#111">fairplayd.N90</div><div class="tbl" style="left:418px;top:484px;color:#111">mobile</div><div class="tbl r" style="left:440px;width:99px;top:484px;color:#111">0</div><div class="tbl r" style="left:510px;width:101px;top:484px;color:#111">3</div><div class="tbl r" style="left:600px;width:99px;top:484px;color:#111">712.00 KB</div><div class="tbl r" style="left:700px;width:99px;top:484px;color:#111">21.99 MB</div><div class="tbl" style="left:806px;top:484px;color:#111">ARM</div><div class="tbl" style="left:890px;top:484px;color:#111">14.03</div><div class="tbl" style="left:216px;top:500px;color:#111">25</div><svg width="7" height="10" style="left:272.5px;top:502.5px"><path d="M0 3.3L2.75 0L5.5 3.3Z M0 5.2L2.75 8.5L5.5 5.2Z" fill="#3e3e3e"/></svg><div class="tbl" style="left:307px;top:500px;color:#111">dataaccessd</div><div class="tbl" style="left:418px;top:500px;color:#111">mobile</div><div class="tbl r" style="left:440px;width:99px;top:500px;color:#111">0</div><div class="tbl r" style="left:510px;width:101px;top:500px;color:#111">7</div><div class="tbl r" style="left:600px;width:99px;top:500px;color:#111">13.89 MB</div><div class="tbl r" style="left:700px;width:99px;top:500px;color:#111">71.25 MB</div><div class="tbl" style="left:806px;top:500px;color:#111">ARM</div><div class="tbl" style="left:890px;top:500px;color:#111">4:39:56.85</div><div class="tbl" style="left:216px;top:516px;color:#111">28</div><svg width="7" height="10" style="left:272.5px;top:518.5px"><path d="M0 3.3L2.75 0L5.5 3.3Z M0 5.2L2.75 8.5L5.5 5.2Z" fill="#3e3e3e"/></svg><div class="tbl" style="left:307px;top:516px;color:#111">apsd</div><div class="tbl" style="left:418px;top:516px;color:#111">mobile</div><div class="tbl r" style="left:440px;width:99px;top:516px;color:#111">0</div><div class="tbl r" style="left:510px;width:101px;top:516px;color:#111">3</div><div class="tbl r" style="left:600px;width:99px;top:516px;color:#111">1.18 MB</div><div class="tbl r" style="left:700px;width:99px;top:516px;color:#111">29.97 MB</div><div class="tbl" style="left:806px;top:516px;color:#111">ARM</div><div class="tbl" style="left:890px;top:516px;color:#111">3:48.96</div><div class="tbl" style="left:216px;top:532px;color:#111">34</div><svg width="7" height="10" style="left:272.5px;top:534.5px"><path d="M0 3.3L2.75 0L5.5 3.3Z M0 5.2L2.75 8.5L5.5 5.2Z" fill="#3e3e3e"/></svg><div class="tbl" style="left:307px;top:532px;color:#111">CommCenter</div><div class="tbl" style="left:418px;top:532px;color:#111">_wireless</div><div class="tbl r" style="left:440px;width:99px;top:532px;color:#111">0</div><div class="tbl r" style="left:510px;width:101px;top:532px;color:#111">11</div><div class="tbl r" style="left:600px;width:99px;top:532px;color:#111">2.96 MB</div><div class="tbl r" style="left:700px;width:99px;top:532px;color:#111">45.30 MB</div><div class="tbl" style="left:806px;top:532px;color:#111">ARM</div><div class="tbl" style="left:890px;top:532px;color:#111">12:31.31</div><div class="tbl" style="left:216px;top:548px;color:#111">35</div><svg width="7" height="10" style="left:272.5px;top:550.5px"><path d="M0 3.3L2.75 0L5.5 3.3Z M0 5.2L2.75 8.5L5.5 5.2Z" fill="#3e3e3e"/></svg><div class="tbl" style="left:307px;top:548px;color:#111">BTServer</div><div class="tbl" style="left:418px;top:548px;color:#111">mobile</div><div class="tbl r" style="left:440px;width:99px;top:548px;color:#111">0</div><div class="tbl r" style="left:510px;width:101px;top:548px;color:#111">2</div><div class="tbl r" style="left:600px;width:99px;top:548px;color:#111">1.04 MB</div><div class="tbl r" style="left:700px;width:99px;top:548px;color:#111">25.33 MB</div><div class="tbl" style="left:806px;top:548px;color:#111">ARM</div><div class="tbl" style="left:890px;top:548px;color:#111">53.44</div><div class="tbl" style="left:216px;top:564px;color:#111">36</div><svg width="7" height="10" style="left:272.5px;top:566.5px"><path d="M0 3.3L2.75 0L5.5 3.3Z M0 5.2L2.75 8.5L5.5 5.2Z" fill="#3e3e3e"/></svg><div class="tbl" style="left:307px;top:564px;color:#111">aosnotifyd</div><div class="tbl" style="left:418px;top:564px;color:#111">mobile</div><div class="tbl r" style="left:440px;width:99px;top:564px;color:#111">0</div><div class="tbl r" style="left:510px;width:101px;top:564px;color:#111">4</div><div class="tbl r" style="left:600px;width:99px;top:564px;color:#111">1.44 MB</div><div class="tbl r" style="left:700px;width:99px;top:564px;color:#111">31.07 MB</div><div class="tbl" style="left:806px;top:564px;color:#111">ARM</div><div class="tbl" style="left:890px;top:564px;color:#111">58.87</div><div class="tbl" style="left:216px;top:580px;color:#111">37</div><svg width="7" height="10" style="left:272.5px;top:582.5px"><path d="M0 3.3L2.75 0L5.5 3.3Z M0 5.2L2.75 8.5L5.5 5.2Z" fill="#3e3e3e"/></svg><div class="tbl" style="left:307px;top:580px;color:#111">notifyd</div><div class="tbl" style="left:418px;top:580px;color:#111">root</div><div class="tbl r" style="left:440px;width:99px;top:580px;color:#111">0</div><div class="tbl r" style="left:510px;width:101px;top:580px;color:#111">3</div><div class="tbl r" style="left:600px;width:99px;top:580px;color:#111">572.00 KB</div><div class="tbl r" style="left:700px;width:99px;top:580px;color:#111">15.09 MB</div><div class="tbl" style="left:806px;top:580px;color:#111">ARM</div><div class="tbl" style="left:890px;top:580px;color:#111">5:52.31</div><div class="tbl" style="left:216px;top:596px;color:#111">51</div><svg width="7" height="10" style="left:272.5px;top:598.5px"><path d="M0 3.3L2.75 0L5.5 3.3Z M0 5.2L2.75 8.5L5.5 5.2Z" fill="#3e3e3e"/></svg><div class="tbl" style="left:307px;top:596px;color:#111">lsd</div><div class="tbl" style="left:418px;top:596px;color:#111">mobile</div><div class="tbl r" style="left:440px;width:99px;top:596px;color:#111">0</div><div class="tbl r" style="left:510px;width:101px;top:596px;color:#111">2</div><div class="tbl r" style="left:600px;width:99px;top:596px;color:#111">1.32 MB</div><div class="tbl r" style="left:700px;width:99px;top:596px;color:#111">14.79 MB</div><div class="tbl" style="left:806px;top:596px;color:#111">ARM</div><div class="tbl" style="left:890px;top:596px;color:#111">14.78</div><div class="tbl" style="left:216px;top:612px;color:#111">54</div><svg width="7" height="10" style="left:272.5px;top:614.5px"><path d="M0 3.3L2.75 0L5.5 3.3Z M0 5.2L2.75 8.5L5.5 5.2Z" fill="#3e3e3e"/></svg><div class="tbl" style="left:307px;top:612px;color:#111">MobilePhone</div><div class="tbl" style="left:418px;top:612px;color:#111">mobile</div><div class="tbl r" style="left:440px;width:99px;top:612px;color:#111">0</div><div class="tbl r" style="left:510px;width:101px;top:612px;color:#111">7</div><div class="tbl r" style="left:600px;width:99px;top:612px;color:#111">6.66 MB</div><div class="tbl r" style="left:700px;width:99px;top:612px;color:#111">121.42 MB</div><div class="tbl" style="left:806px;top:612px;color:#111">ARM</div><div class="tbl" style="left:890px;top:612px;color:#111">1:19.91</div><div class="tbl" style="left:216px;top:628px;color:#111">1802</div><svg width="7" height="10" style="left:272.5px;top:630.5px"><path d="M0 3.3L2.75 0L5.5 3.3Z M0 5.2L2.75 8.5L5.5 5.2Z" fill="#3e3e3e"/></svg><div class="tbl" style="left:307px;top:628px;color:#111">iapd</div><div class="tbl" style="left:418px;top:628px;color:#111">mobile</div><div class="tbl r" style="left:440px;width:99px;top:628px;color:#111">0</div><div class="tbl r" style="left:510px;width:101px;top:628px;color:#111">5</div><div class="tbl r" style="left:600px;width:99px;top:628px;color:#111">1.44 MB</div><div class="tbl r" style="left:700px;width:99px;top:628px;color:#111">31.14 MB</div><div class="tbl" style="left:806px;top:628px;color:#111">ARM</div><div class="tbl" style="left:890px;top:628px;color:#111">1:20.91</div><div class="tbl" style="left:216px;top:644px;color:#111">1804</div><svg width="7" height="10" style="left:272.5px;top:646.5px"><path d="M0 3.3L2.75 0L5.5 3.3Z M0 5.2L2.75 8.5L5.5 5.2Z" fill="#3e3e3e"/></svg><div class="tbl" style="left:307px;top:644px;color:#111">MobileMusicPlaye</div><div class="tbl" style="left:418px;top:644px;color:#111">mobile</div><div class="tbl r" style="left:440px;width:99px;top:644px;color:#111">0</div><div class="tbl r" style="left:510px;width:101px;top:644px;color:#111">5</div><div class="tbl r" style="left:600px;width:99px;top:644px;color:#111">4.47 MB</div><div class="tbl r" style="left:700px;width:99px;top:644px;color:#111">87.48 MB</div><div class="tbl" style="left:806px;top:644px;color:#111">ARM</div><div class="tbl" style="left:890px;top:644px;color:#111">51.63</div><div class="tbl" style="left:216px;top:660px;color:#111">2032</div><svg width="7" height="10" style="left:272.5px;top:662.5px"><path d="M0 3.3L2.75 0L5.5 3.3Z M0 5.2L2.75 8.5L5.5 5.2Z" fill="#3e3e3e"/></svg><div class="tbl" style="left:307px;top:660px;color:#111">MobileMail</div><div class="tbl" style="left:418px;top:660px;color:#111">mobile</div><div class="tbl r" style="left:440px;width:99px;top:660px;color:#111">0</div><div class="tbl r" style="left:510px;width:101px;top:660px;color:#111">9</div><div class="tbl r" style="left:600px;width:99px;top:660px;color:#111">14.97 MB</div><div class="tbl r" style="left:700px;width:99px;top:660px;color:#111">150.02 MB</div><div class="tbl" style="left:806px;top:660px;color:#111">ARM</div><div class="tbl" style="left:890px;top:660px;color:#111">4:24.85</div><div class="tbl" style="left:216px;top:676px;color:#111">5377</div><svg width="7" height="10" style="left:272.5px;top:678.5px"><path d="M0 3.3L2.75 0L5.5 3.3Z M0 5.2L2.75 8.5L5.5 5.2Z" fill="#3e3e3e"/></svg><div class="tbl" style="left:307px;top:676px;color:#111">spd</div><div class="tbl" style="left:418px;top:676px;color:#111">root</div><div class="tbl r" style="left:440px;width:99px;top:676px;color:#111">0</div><div class="tbl r" style="left:510px;width:101px;top:676px;color:#111">2</div><div class="tbl r" style="left:600px;width:99px;top:676px;color:#111">560.00 KB</div><div class="tbl r" style="left:700px;width:99px;top:676px;color:#111">12.59 MB</div><div class="tbl" style="left:806px;top:676px;color:#111">ARM</div><div class="tbl" style="left:890px;top:676px;color:#111">00.27</div><div class="tbl" style="left:216px;top:692px;color:#111">5386</div><svg width="7" height="10" style="left:272.5px;top:694.5px"><path d="M0 3.3L2.75 0L5.5 3.3Z M0 5.2L2.75 8.5L5.5 5.2Z" fill="#3e3e3e"/></svg><div class="tbl" style="left:307px;top:692px;color:#111">ptpd</div><div class="tbl" style="left:418px;top:692px;color:#111">mobile</div><div class="tbl r" style="left:440px;width:99px;top:692px;color:#111">0</div><div class="tbl r" style="left:510px;width:101px;top:692px;color:#111">4</div><div class="tbl r" style="left:600px;width:99px;top:692px;color:#111">1.59 MB</div><div class="tbl r" style="left:700px;width:99px;top:692px;color:#111">40.11 MB</div><div class="tbl" style="left:806px;top:692px;color:#111">ARM</div><div class="tbl" style="left:890px;top:692px;color:#111">00.74</div><div class="tbl" style="left:216px;top:708px;color:#111">5394</div><svg width="7" height="10" style="left:272.5px;top:710.5px"><path d="M0 3.3L2.75 0L5.5 3.3Z M0 5.2L2.75 8.5L5.5 5.2Z" fill="#3e3e3e"/></svg><div class="tbl" style="left:307px;top:708px;color:#111">notification_pro</div><div class="tbl" style="left:418px;top:708px;color:#111">mobile</div><div class="tbl r" style="left:440px;width:99px;top:708px;color:#111">0</div><div class="tbl r" style="left:510px;width:101px;top:708px;color:#111">3</div><div class="tbl r" style="left:600px;width:99px;top:708px;color:#111">412.00 KB</div><div class="tbl r" style="left:700px;width:99px;top:708px;color:#111">14.05 MB</div><div class="tbl" style="left:806px;top:708px;color:#111">ARM</div><div class="tbl" style="left:890px;top:708px;color:#111">00.06</div><div class="tbl" style="left:216px;top:724px;color:#111">5404</div><svg width="7" height="10" style="left:272.5px;top:726.5px"><path d="M0 3.3L2.75 0L5.5 3.3Z M0 5.2L2.75 8.5L5.5 5.2Z" fill="#3e3e3e"/></svg><div class="tbl" style="left:307px;top:724px;color:#111">MobileNotes</div><div class="tbl" style="left:418px;top:724px;color:#111">mobile</div><div class="tbl r" style="left:440px;width:99px;top:724px;color:#111">0</div><div class="tbl r" style="left:510px;width:101px;top:724px;color:#111">5</div><div class="tbl r" style="left:600px;width:99px;top:724px;color:#111">4.63 MB</div><div class="tbl r" style="left:700px;width:99px;top:724px;color:#111">89.08 MB</div><div class="tbl" style="left:806px;top:724px;color:#111">ARM</div><div class="tbl" style="left:890px;top:724px;color:#111">00.59</div><div class="tbl" style="left:216px;top:740px;color:#fff">5408</div><svg width="7" height="10" style="left:272.5px;top:742.5px"><path d="M0 3.3L2.75 0L5.5 3.3Z M0 5.2L2.75 8.5L5.5 5.2Z" fill="#fff"/></svg><div class="tbl" style="left:307px;top:740px;color:#fff">AmazonUK</div><div class="tbl" style="left:418px;top:740px;color:#fff">mobile</div><div class="tbl r" style="left:440px;width:99px;top:740px;color:#fff">0</div><div class="tbl r" style="left:510px;width:101px;top:740px;color:#fff">7</div><div class="tbl r" style="left:600px;width:99px;top:740px;color:#fff">4.80 MB</div><div class="tbl r" style="left:700px;width:99px;top:740px;color:#fff">87.29 MB</div><div class="tbl" style="left:806px;top:740px;color:#fff">ARM</div><div class="tbl" style="left:890px;top:740px;color:#fff">01.27</div><div class="tbl" style="left:216px;top:756px;color:#111">5409</div><svg width="7" height="10" style="left:272.5px;top:758.5px"><path d="M0 3.3L2.75 0L5.5 3.3Z M0 5.2L2.75 8.5L5.5 5.2Z" fill="#3e3e3e"/></svg><div class="tbl" style="left:307px;top:756px;color:#111">eBay</div><div class="tbl" style="left:418px;top:756px;color:#111">mobile</div><div class="tbl r" style="left:440px;width:99px;top:756px;color:#111">0</div><div class="tbl r" style="left:510px;width:101px;top:756px;color:#111">18</div><div class="tbl r" style="left:600px;width:99px;top:756px;color:#111">5.04 MB</div><div class="tbl r" style="left:700px;width:99px;top:756px;color:#111">99.43 MB</div><div class="tbl" style="left:806px;top:756px;color:#111">ARM</div><div class="tbl" style="left:890px;top:756px;color:#111">02.28</div><div class="tbl" style="left:216px;top:772px;color:#111">5410</div><svg width="7" height="10" style="left:272.5px;top:774.5px"><path d="M0 3.3L2.75 0L5.5 3.3Z M0 5.2L2.75 8.5L5.5 5.2Z" fill="#3e3e3e"/></svg><div class="tbl" style="left:307px;top:772px;color:#111">ConverterPlus</div><div class="tbl" style="left:418px;top:772px;color:#111">mobile</div><div class="tbl r" style="left:440px;width:99px;top:772px;color:#111">0</div><div class="tbl r" style="left:510px;width:101px;top:772px;color:#111">5</div><div class="tbl r" style="left:600px;width:99px;top:772px;color:#111">3.48 MB</div><div class="tbl r" style="left:700px;width:99px;top:772px;color:#111">87.34 MB</div><div class="tbl" style="left:806px;top:772px;color:#111">ARM</div><div class="tbl" style="left:890px;top:772px;color:#111">02.03</div><div class="tbl" style="left:216px;top:788px;color:#111">5417</div><svg width="7" height="10" style="left:272.5px;top:790.5px"><path d="M0 3.3L2.75 0L5.5 3.3Z M0 5.2L2.75 8.5L5.5 5.2Z" fill="#3e3e3e"/></svg><div class="tbl" style="left:307px;top:788px;color:#111">AngryBirdsRio</div><div class="tbl" style="left:418px;top:788px;color:#111">mobile</div><div class="tbl r" style="left:440px;width:99px;top:788px;color:#111">0</div><div class="tbl r" style="left:510px;width:101px;top:788px;color:#111">15</div><div class="tbl r" style="left:600px;width:99px;top:788px;color:#111">21.38 MB</div><div class="tbl r" style="left:700px;width:99px;top:788px;color:#111">142.91 MB</div><div class="tbl" style="left:806px;top:788px;color:#111">ARM</div><div class="tbl" style="left:890px;top:788px;color:#111">40.71</div><div class="tbl" style="left:216px;top:804px;color:#111">5425</div><svg width="7" height="10" style="left:272.5px;top:806.5px"><path d="M0 3.3L2.75 0L5.5 3.3Z M0 5.2L2.75 8.5L5.5 5.2Z" fill="#3e3e3e"/></svg><div class="tbl" style="left:307px;top:804px;color:#111">AngryBirdsHallow</div><div class="tbl" style="left:418px;top:804px;color:#111">mobile</div><div class="tbl r" style="left:440px;width:99px;top:804px;color:#111">0</div><div class="tbl r" style="left:510px;width:101px;top:804px;color:#111">7</div><div class="tbl r" style="left:600px;width:99px;top:804px;color:#111">30.47 MB</div><div class="tbl r" style="left:700px;width:99px;top:804px;color:#111">148.84 MB</div><div class="tbl" style="left:806px;top:804px;color:#111">ARM</div><div class="tbl" style="left:890px;top:804px;color:#111">07.22</div><div class="tbl" style="left:216px;top:820px;color:#111">5429</div><svg width="7" height="10" style="left:272.5px;top:822.5px"><path d="M0 3.3L2.75 0L5.5 3.3Z M0 5.2L2.75 8.5L5.5 5.2Z" fill="#3e3e3e"/></svg><div class="tbl" style="left:307px;top:820px;color:#111">AngryBirds</div><div class="tbl" style="left:418px;top:820px;color:#111">mobile</div><div class="tbl r" style="left:440px;width:99px;top:820px;color:#111">0</div><div class="tbl r" style="left:510px;width:101px;top:820px;color:#111">8</div><div class="tbl r" style="left:600px;width:99px;top:820px;color:#111">31.23 MB</div><div class="tbl r" style="left:700px;width:99px;top:820px;color:#111">159.80 MB</div><div class="tbl" style="left:806px;top:820px;color:#111">ARM</div><div class="tbl" style="left:890px;top:820px;color:#111">10.05</div><div class="tbl" style="left:216px;top:836px;color:#111">5432</div><svg width="7" height="10" style="left:272.5px;top:838.5px"><path d="M0 3.3L2.75 0L5.5 3.3Z M0 5.2L2.75 8.5L5.5 5.2Z" fill="#3e3e3e"/></svg><div class="tbl" style="left:307px;top:836px;color:#111">CutTheRope</div><div class="tbl" style="left:418px;top:836px;color:#111">mobile</div><div class="tbl r" style="left:440px;width:99px;top:836px;color:#111">0</div><div class="tbl r" style="left:510px;width:101px;top:836px;color:#111">8</div><div class="tbl r" style="left:600px;width:99px;top:836px;color:#111">62.12 MB</div><div class="tbl r" style="left:700px;width:99px;top:836px;color:#111">185.00 MB</div><div class="tbl" style="left:806px;top:836px;color:#111">ARM</div><div class="tbl" style="left:890px;top:836px;color:#111">14.68</div><div class="tbl" style="left:216px;top:852px;color:#111">5437</div><svg width="7" height="10" style="left:272.5px;top:854.5px"><path d="M0 3.3L2.75 0L5.5 3.3Z M0 5.2L2.75 8.5L5.5 5.2Z" fill="#3e3e3e"/></svg><div class="tbl" style="left:307px;top:852px;color:#111">Fruit</div><div class="tbl" style="left:418px;top:852px;color:#111">mobile</div><div class="tbl r" style="left:440px;width:99px;top:852px;color:#111">0</div><div class="tbl r" style="left:510px;width:101px;top:852px;color:#111">10</div><div class="tbl r" style="left:600px;width:99px;top:852px;color:#111">29.96 MB</div><div class="tbl r" style="left:700px;width:99px;top:852px;color:#111">153.58 MB</div><div class="tbl" style="left:806px;top:852px;color:#111">ARM</div><div class="tbl" style="left:890px;top:852px;color:#111">26.51</div><div class="tbl" style="left:216px;top:868px;color:#111">5444</div><svg width="7" height="10" style="left:272.5px;top:870.5px"><path d="M0 3.3L2.75 0L5.5 3.3Z M0 5.2L2.75 8.5L5.5 5.2Z" fill="#3e3e3e"/></svg><div class="tbl" style="left:307px;top:868px;color:#111">TinyWings</div><div class="tbl" style="left:418px;top:868px;color:#111">mobile</div><div class="tbl r" style="left:440px;width:99px;top:868px;color:#111">0</div><div class="tbl r" style="left:510px;width:101px;top:868px;color:#111">10</div><div class="tbl r" style="left:600px;width:99px;top:868px;color:#111">7.18 MB</div><div class="tbl r" style="left:700px;width:99px;top:868px;color:#111">123.77 MB</div><div class="tbl" style="left:806px;top:868px;color:#111">ARM</div><div class="tbl" style="left:890px;top:868px;color:#111">1:29.74</div><div class="tbl" style="left:216px;top:884px;color:#111">5452</div><svg width="7" height="10" style="left:272.5px;top:886.5px"><path d="M0 3.3L2.75 0L5.5 3.3Z M0 5.2L2.75 8.5L5.5 5.2Z" fill="#3e3e3e"/></svg><div class="tbl" style="left:307px;top:884px;color:#111">WordsWithFriends</div><div class="tbl" style="left:418px;top:884px;color:#111">mobile</div><div class="tbl r" style="left:440px;width:99px;top:884px;color:#111">0</div><div class="tbl r" style="left:510px;width:101px;top:884px;color:#111">12</div><div class="tbl r" style="left:600px;width:99px;top:884px;color:#111">16.80 MB</div><div class="tbl r" style="left:700px;width:99px;top:884px;color:#111">118.31 MB</div><div class="tbl" style="left:806px;top:884px;color:#111">ARM</div><div class="tbl" style="left:890px;top:884px;color:#111">06.22</div><div style="left:214px;top:949px;width:1046px;height:14px;background:linear-gradient(#c8c8c8 0,#c8c8c8 1px,#f4f4f4 1px,#ffffff 50%,#ececec)"></div><div style="left:219px;top:949px;width:1014px;height:14px;border-radius:7px;background:linear-gradient(#c8c8c8,#e8e8e8 30%,#fff 70%,#eaeaea);box-shadow:inset 2px 0 3px rgba(0,0,0,.12),inset -2px 0 2px rgba(0,0,0,.3)"></div><div style="left:220px;top:950px;width:980px;height:14px;border-radius:7px;border:1px solid #0a3cc0;background:linear-gradient(#9fc2ec 0,#b4d2f2 25%,#5aa0ea 45%,#4a98ea 60%,#8ed0fa 85%,#b8ecff 100%)"></div><svg width="8" height="10" style="left:1236px;top:952px"><path d="M5 1.8L1.2 5L5 8.2Z" fill="#444"/></svg></div></body></html>
